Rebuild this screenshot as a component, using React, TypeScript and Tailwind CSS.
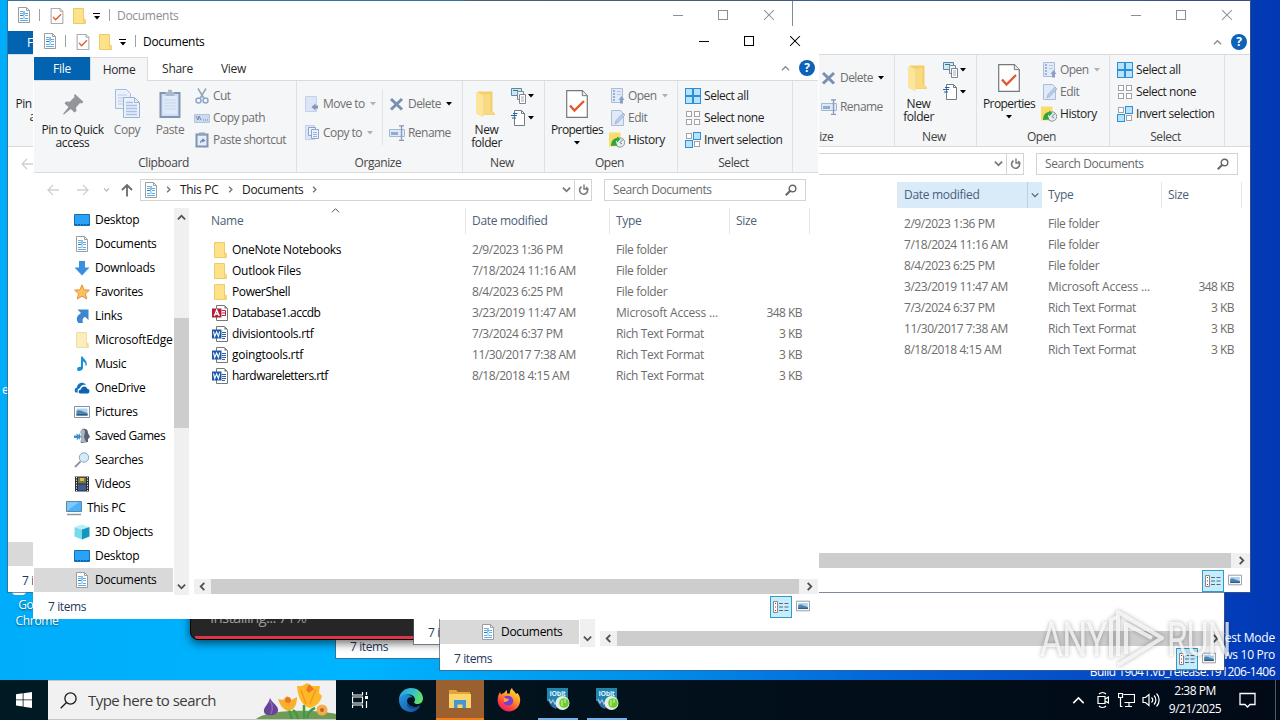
import type { ReactNode } from "react";

// Which part of a stacked window stays uncovered on the desktop
type Part = "full" | "left" | "right" | "bottom" | "status";

/* ---------- small glyphs ---------- */

function Caret({ className = "text-black" }: { className?: string }) {
    return (
        <svg width="6" height="4" viewBox="0 0 6 4" className={`shrink-0 ${className}`}>
            <path d="M0 0h6L3 3.6z" fill="currentColor" />
        </svg>
    );
}

function Chevron({ d, size = 9, width = 2, className = "text-[#505050]" }: { d: string; size?: number; width?: number; className?: string }) {
    return (
        <svg width={size} height={size} viewBox="0 0 10 10" className={`shrink-0 ${className}`} fill="none" stroke="currentColor" strokeWidth={width}>
            <path d={d} />
        </svg>
    );
}

const UP = "M1 7l4-4 4 4";
const DOWN = "M1 3l4 4 4-4";
const LEFT = "M7 1L3 5l4 4";
const RIGHT = "M3 1l4 4-4 4";

function Svg({ children, w = 16, h = 16, box }: { children: ReactNode; w?: number; h?: number; box?: string }) {
    return (
        <svg width={w} height={h} viewBox={box ?? `0 0 ${w} ${h}`} fill="none" className="shrink-0">
            {children}
        </svg>
    );
}

/* ---------- file and folder icons ---------- */

function DocIcon() {
    return (
        <Svg>
            <path d="M2.5.5h8l3 3v12h-11z" fill="#fff" stroke="#9a9ea3" />
            <path d="M10.500.5v3h3" stroke="#9a9ea3" />
            <path d="M4 4.500h3M4 6.500h3M4 11.500h3M4 13.500h8M9 6.500h3M9 8.500h3M9 11.500h3" stroke="#5fb0e6" />
            <path d="M4 8.500h3.500M8 4v4" stroke="#2a7fc4" />
            <path d="M8 9v3" stroke="#5fb0e6" />
        </Svg>
    );
}

function CheckDocIcon({ w = 16, h = 16 }: { w?: number; h?: number }) {
    return (
        <Svg w={w} h={h} box="0 0 22 28">
            <path d="M.7.7h15.600l5 5v21.600H.7z" fill="#fff" stroke="#76797c" strokeWidth="1.200" />
            <path d="M16.300.7v5h5" fill="#e8e8e8" stroke="#76797c" />
            <path d="M4 15.500l4.500 5L18 11" stroke="#e2592b" strokeWidth="2.400" />
        </Svg>
    );
}

function FolderIcon({ pale = false }: { pale?: boolean }) {
    return (
        <Svg>
            <path d="M2.500.5h10v11l1.500 1v3H2.500z" fill={pale ? "#fbeebc" : "#fde28a"} stroke={pale ? "#f0dfa4" : "#eccb68"} />
            <path d="M12.500 10.500l2 1v4h-2z" fill={pale ? "#f3dc98" : "#f7d874"} stroke={pale ? "#f0dfa4" : "#eccb68"} strokeWidth=".6" />
        </Svg>
    );
}

function BigFolderIcon() {
    return (
        <Svg w={22} h={28}>
            <path d="M2 1.500h14.500v20l2.500 2v1.500H2z" fill="#f3cf6c" />
            <path d="M0 2l7.500 3v22.500L0 23.500z" fill="#fde49b" />
            <path d="M7.500 5l7-1.500V21l4.500 3.500H7.500z" fill="#f8da83" />
        </Svg>
    );
}

function WordIcon() {
    return (
        <Svg>
            <path d="M4.500.5h8l3 3v12h-11z" fill="#fff" stroke="#777" />
            <path d="M12.500.5v3h3z" fill="#777" />
            <path d="M10 6.500h4M10 8.500h4M10 10.500h4M10 12.500h3" stroke="#2a5ca8" />
            <path d="M0 3.500h9.500v9H0z" fill="#1e58a8" />
            <path d="M1.500 5.500l1.200 5 1.900-4.500 1.800 4.500 1.300-5" stroke="#fff" strokeWidth="1.100" />
        </Svg>
    );
}

function AccessIcon() {
    return (
        <Svg>
            <path d="M4.500.5h8l3 3v12h-11z" fill="#fff" stroke="#777" />
            <path d="M12.500.5v3h3z" fill="#777" />
            <path d="M10 5.500h3.500v5H10M10 8h3" stroke="#b5223f" />
            <path d="M0 3.500h9.500v9H0z" fill="#b01f3b" />
            <path d="M2.300 11L4.700 5l2.500 6M3.200 9h3.200" stroke="#fff" strokeWidth="1.300" />
        </Svg>
    );
}

function DesktopIcon() {
    return (
        <Svg>
            <path d="M.5 2.500h15v11H.5z" fill="#2aa2f8" stroke="#1272b8" />
            <path d="M1 12.500h14" stroke="#0f5c9c" strokeDasharray="2 1" />
        </Svg>
    );
}

function DownloadIcon() {
    return (
        <Svg>
            <path d="M5 1h6v6.500h4.500L8 15.500.5 7.500H5z" fill="#3b8ee0" />
        </Svg>
    );
}

function StarIcon() {
    return (
        <Svg>
            <path d="M8 .8l2.100 5 5.300.4-4 3.500 1.300 5.300L8 12.100 3.300 15l1.300-5.300-4-3.500 5.300-.4z" fill="#fbc15e" stroke="#e2903a" />
        </Svg>
    );
}

function LinkIcon() {
    return (
        <Svg>
            <path d="M3.500 1.500h11v10.500l-3.500-3.300c-2.500 1.300-3 3.500-2 6.300H4.500C1.500 11.500 2.500 8 7 5z" fill="#3d87cf" />
        </Svg>
    );
}

function MusicIcon() {
    return (
        <Svg>
            <path d="M7 .5h1.600c.5 2.500 4.600 3.500 4.200 8-.3 1-1 1.600-1.300 1.600.6-2.600-.7-3.800-2.500-4.600v6.800c-.4 2.500-5.800 4-6 .9C3 11 5.500 10.300 7 10.800z" fill="#1c8fdc" />
        </Svg>
    );
}

function OneDriveIcon() {
    return (
        <Svg>
            <path d="M1.500 12.500C0 11 .5 8 3 7.500 3.200 3 9.500 1 12 5 9 4 6.500 5.500 6 8c-2.500.5-3 3-2 4.500z" fill="#1272c2" />
            <path d="M6.500 13.500c-2.500 0-2.500-4 .5-4 .5-4 5.500-4 6.200-.7 3 .2 3 4.700.3 4.700z" fill="#0f62ae" />
        </Svg>
    );
}

function PictureIcon({ w = 16 }: { w?: number }) {
    return (
        <Svg w={w} h={w} box="0 0 16 16">
            <path d="M.5 2.500h15v11H.5z" fill="#fff" stroke="#8b8f96" />
            <path d="M2.500 4.500h11v7h-11z" fill="#a9d4f5" />
            <path d="M2.500 7c3-2 6 1 11 2v2.500h-11z" fill="#5484a8" />
            <path d="M2.500 10h11v1.500h-11z" fill="#2d5d88" />
        </Svg>
    );
}

function GamesIcon() {
    return (
        <Svg>
            <path d="M8 1c5-1 6 2 6 4l2 4-2 2v3l-7 1z" fill="#56616c" />
            <path d="M6 4c2-4 5-3 5 0l-1 5 2 5H6l2-5z" fill="#aab5bf" />
            <path d="M0 7.500h3l-1-2 3 1.500V5l2 3.500L5 12v-2l-2.500 2.500.5-2.500H0z" fill="#3f8bd0" />
        </Svg>
    );
}

function SearchFolderIcon() {
    return (
        <Svg>
            <path d="M6.500 9.500L1 15" stroke="#8d959c" strokeWidth="1.800" />
            <circle cx="10" cy="5.500" r="4.700" fill="#d3ebfb" stroke="#8aa5b8" />
        </Svg>
    );
}

function VideoIcon() {
    return (
        <Svg>
            <path d="M1 .5h14v15H1z" fill="#2b2d33" />
            <path d="M4 1.500h8v6H4z" fill="#6f7a46" />
            <path d="M4 8.500h8v6H4z" fill="#3f5d94" />
            <path d="M2.500 1v14M13.500 1v14" stroke="#e6e6e6" strokeDasharray="1.300 1.300" />
            <path d="M6 2h4v3H6z" fill="#d8bc4f" />
        </Svg>
    );
}

function ThisPcIcon() {
    return (
        <Svg>
            <path d="M.5 1.500h15v10H.5z" fill="#4db2f5" stroke="#5b87a8" />
            <path d="M1 11V2h12z" fill="#7cc9fa" />
            <path d="M1 14.500h14" stroke="#8a98a5" strokeWidth="1.500" />
        </Svg>
    );
}

function CubeIcon() {
    return (
        <Svg>
            <path d="M.5 3L8 5.500v10L.5 12.500z" fill="#76dcec" />
            <path d="M.5 3L8 .5 15.500 3 8 5.500z" fill="#b4f0f7" />
            <path d="M8 5.500L15.500 3v9.500L8 15.500z" fill="#1597bd" />
        </Svg>
    );
}

/* ---------- ribbon icons ---------- */

function PinIcon() {
    return (
        <Svg w={24} h={24}>
            <path d="M14 2l8.500 8-2 1.500-1.500-.5-4 4.500.5 3.500-2 1.500L9.700 17 3 22.500l-1-.5 5.500-7L3.500 11.500 5 9.500l3.800.3L13.500 5 13 3.500z" fill="#929599" />
        </Svg>
    );
}

function CopyIcon() {
    return (
        <Svg w={25} h={29}>
            <path d="M.5.500h11l4 4v15H.5z" fill="#eaf1fb" stroke="#a9bbd9" />
            <path d="M3 6h9M3 9h10M3 12h10M3 15h8" stroke="#b8cbe8" />
            <path d="M8.500 8.500h11l5 5v15h-16z" fill="#eaf1fb" stroke="#9db1d2" />
            <path d="M19.500 8.500v5h5" stroke="#9db1d2" />
            <path d="M11 13.500h7M11 16.500h11M11 19.500h11M11 22.500h11M11 25.500h11" stroke="#a9c1e6" strokeWidth="1.300" />
        </Svg>
    );
}

function PasteIcon() {
    return (
        <Svg w={22} h={29}>
            <path d="M1.500 4h19v24h-19z" fill="#cfdef5" stroke="#8294b4" strokeWidth="2" />
            <path d="M4 7h14v18H4z" fill="#dfe9f8" />
            <path d="M6.500 3H9V.8h4V3h2.500v4h-9z" fill="#a9b7cd" />
            <path d="M5 11h12M5 14h12M5 17h12M5 20h12" stroke="#c3d4ee" />
        </Svg>
    );
}

function CutIcon() {
    return (
        <Svg>
            <path d="M4 .5l6 10M12 .5l-6 10" stroke="#98a5b8" strokeWidth="1.500" />
            <circle cx="4.500" cy="12.500" r="2.500" stroke="#8ea7cc" strokeWidth="1.500" />
            <circle cx="11.500" cy="12.500" r="2.500" stroke="#8ea7cc" strokeWidth="1.500" />
        </Svg>
    );
}

function CopyPathIcon() {
    return (
        <Svg>
            <path d="M.5 4.500h15v8H.5z" fill="#cbdaf0" stroke="#b6c5de" />
            <path d="M2 6l2 4 1-4 2 4M9 10h1M11 10h1M13 10h1" stroke="#7487a8" />
        </Svg>
    );
}

function PasteShortcutIcon() {
    return (
        <Svg>
            <path d="M2.500 2.500h11v12h-11z" fill="#e4edf9" stroke="#8093b3" strokeWidth="2" />
            <path d="M5 .5h6v3H5z" fill="#93a4bf" />
            <path d="M6 12c-.5-3 1-4 2.500-4.500V6l3 2.500-3 2.300V9.500C7 9.800 6.500 10.500 6 12z" fill="#7089b3" />
        </Svg>
    );
}

function MoveToIcon() {
    return (
        <Svg>
            <path d="M1.500.5h11v15h-11z" fill="#dbe5f5" stroke="#c2d1e9" />
            <path d="M14 9.500h-2.500V7.500L7.500 11l4 3.500v-2H14z" fill="#8296b8" />
        </Svg>
    );
}

function CopyToIcon() {
    return (
        <Svg>
            <path d="M1.500.500h9v14h-9z" fill="#dbe5f5" stroke="#c2d1e9" />
            <path d="M4.500 2.500h7v8h-7z" fill="#edf3fc" stroke="#8fa5c8" />
            <path d="M7.500 4.500h7v9h-7z" fill="#edf3fc" stroke="#8fa5c8" />
            <path d="M9 7.500h4M9 9.500h4M9 11.500h4" stroke="#9cb3d8" />
        </Svg>
    );
}

function DeleteIcon() {
    return (
        <Svg>
            <path d="M2 3l11 10.500M13 3L2 13.500" stroke="#7a8faf" strokeWidth="3" />
        </Svg>
    );
}

function RenameIcon() {
    return (
        <Svg>
            <path d="M.5 4.500h15v7H.5z" fill="#dfe9f8" stroke="#a4b7d6" />
            <path d="M2 7h7v3H2z" fill="#93abd3" />
            <path d="M12.500 1.500v13M10 .8h2.500L15 .8M10 15.300h5" stroke="#8298bd" strokeWidth="1.300" />
        </Svg>
    );
}

function NewItemIcon() {
    return (
        <Svg>
            <path d="M.5.500h10v7H.5z" fill="#cfe6f8" stroke="#5a86ab" />
            <path d="M2 2.500h5" stroke="#377d6f" />
            <path d="M6.500 3.500h6v8h-6z" fill="#f2f6fa" stroke="#7c8791" />
            <path d="M8.500 6.500h6v9h-6z" fill="#fff" stroke="#7c8791" />
            <path d="M10 9h3M10 11h3M10 13h3" stroke="#a4aeb8" />
        </Svg>
    );
}

function EasyAccessIcon() {
    return (
        <Svg>
            <path d="M3.500.5h7l3 3v12h-10z" fill="#fff" stroke="#757a80" />
            <path d="M10.500.5v3h3" stroke="#757a80" />
            <path d="M2 3.500h4.500M0 5.500h6M1 8h4" stroke="#1a62b0" strokeWidth="1.200" />
        </Svg>
    );
}

function OpenIcon() {
    return (
        <Svg>
            <path d="M2.500.5h11v14h-11z" fill="#e2ebf8" stroke="#abbcd8" />
            <path d="M4 3h2M4 6h2M4 9h2M4 12h2" stroke="#86a0cb" strokeWidth="1.500" />
            <path d="M8 3.500h4M8 6.500h4" stroke="#b3c6e4" />
            <path d="M12.500 8l3 4H14v3.500h-3V12H9.500z" fill="#8ba0c4" />
        </Svg>
    );
}

function EditIcon() {
    return (
        <Svg>
            <path d="M2.500.5h9l3 3v12h-12z" fill="#dfe9f8" stroke="#abbcd8" />
            <path d="M6 14l1-3.500 7-7.500 2 2-7 7.500z" fill="#b8cae6" stroke="#96abd0" strokeWidth=".6" />
        </Svg>
    );
}

function HistoryIcon() {
    return (
        <Svg>
            <path d="M0 .5h11.500v14H0z" fill="#f9dc6a" />
            <circle cx="11" cy="10.500" r="4.700" fill="#e6ebed" stroke="#8d979e" />
            <path d="M11 10.500l3-3M11 10.500l2 1.500" stroke="#70808a" />
            <path d="M2 14c0-4.500 2-7.500 6-8V4.500L11.500 7 8 10.500V8.300c-1.500.5-1 3 .5 5.200z" fill="#33a540" />
        </Svg>
    );
}

function SelectIcon({ cells }: { cells: [boolean, boolean, boolean, boolean] }) {
    const spots = [[0, 0], [8, 0], [0, 8], [8, 8]];
    return (
        <Svg>
            {spots.map(([x, y], i) =>
                cells[i] ? (
                    <rect key={i} x={x + 0.5} y={y + 0.5} width="7" height="7" fill="#b9e3fb" stroke="#2d8fd9" />
                ) : (
                    <rect key={i} x={x + 1.5} y={y + 1.5} width="5" height="5" fill="#fff" stroke="#a3a3a3" />
                ),
            )}
        </Svg>
    );
}

/* ---------- ribbon ---------- */

function SmallItem({ icon, label, off = false, caret, className = "h-[22px]" }: { icon: ReactNode; label: string; off?: boolean; caret?: string; className?: string }) {
    return (
        <div className={`flex items-center whitespace-nowrap ${className} ${off ? "tracking-[-0.540px] text-[#6f6f6f]" : "tracking-[-0.450px] text-[#1e1e1e]"}`}>
            {icon}
            <span className="ml-[3px]">{label}</span>
            {caret && (
                <span className="ml-[5px]">
                    <Caret className={caret} />
                </span>
            )}
        </div>
    );
}

function BigItem({ icon, lines, className, off = false }: { icon: ReactNode; lines: string[]; className: string; off?: boolean }) {
    return (
        <div className={`flex shrink-0 flex-col items-center whitespace-nowrap leading-[13px] ${className} ${off ? "text-[#6f6f6f]" : "text-[#1e1e1e]"}`}>
            <div className="mt-[4px] mb-[5px] flex h-[29px] items-center">{icon}</div>
            {lines.map((line) => (
                <span key={line}>{line}</span>
            ))}
        </div>
    );
}

function Group({ label, className, children }: { label?: string; className: string; children?: ReactNode }) {
    return (
        <div className={`flex h-[91px] shrink-0 flex-col border-r border-[#dfe1e3] ${className}`}>
            <div className="flex h-[73px] pt-1">{children}</div>
            {label && <div className="pt-px pr-[3px] text-center leading-[18px] text-[#444]">{label}</div>}
        </div>
    );
}

function Ribbon({ part }: { part: Part }) {
    const full = part === "full";
    if (part === "left") {
        return (
            <div className="flex h-[93px] border-y border-[#dadbdc] bg-[#f5f6f7] tracking-[-0.420px]">
                <Group className="w-[263px]">
                    <BigItem icon={<PinIcon />} lines={["Pin to Quick", "access"]} className="w-[77px]" />
                </Group>
            </div>
        );
    }
    return (
        <div className="flex h-[93px] border-y border-[#dadbdc] bg-[#f5f6f7] tracking-[-0.420px]">
            <Group label={full ? "Clipboard" : undefined} className="w-[263px]">
                {full && (
                    <>
                        <BigItem icon={<PinIcon />} lines={["Pin to Quick", "access"]} className="w-[77px]" />
                        <BigItem icon={<CopyIcon />} lines={["Copy"]} className="w-[32px]" off />
                        <BigItem icon={<PasteIcon />} lines={["Paste"]} className="ml-[5px] w-[44px]" off />
                        <div className="ml-[2px]">
                            <SmallItem icon={<CutIcon />} label="Cut" off />
                            <SmallItem icon={<CopyPathIcon />} label="Copy path" off />
                            <SmallItem icon={<PasteShortcutIcon />} label="Paste shortcut" off />
                        </div>
                    </>
                )}
            </Group>
            <Group label="Organize" className="w-[166px]">
                <div className="ml-[9px] w-[76px] pt-1">
                    {full && (
                        <>
                            <SmallItem icon={<MoveToIcon />} label="Move to" off caret="text-[#b0b0b0]" className="-ml-[2px] h-[29px]" />
                            <SmallItem icon={<CopyToIcon />} label="Copy to" off caret="text-[#b0b0b0]" className="-ml-[2px] h-[29px]" />
                        </>
                    )}
                </div>
                <div className="mt-1 mr-[6px] h-[56px] w-px bg-[#e2e3e4]" />
                <div className="pt-1">
                    <SmallItem icon={<DeleteIcon />} label="Delete" off caret="text-black" className="h-[29px]" />
                    <SmallItem icon={<RenameIcon />} label="Rename" off className="h-[29px]" />
                </div>
            </Group>
            <Group label="New" className="w-[82px]">
                <BigItem icon={<BigFolderIcon />} lines={["New", "folder"]} className="w-[47px]" />
                <div className="ml-px">
                    <div className="flex h-[22px] items-center gap-px">
                        <NewItemIcon />
                        <Caret />
                    </div>
                    <div className="flex h-[22px] items-center gap-px">
                        <EasyAccessIcon />
                        <Caret />
                    </div>
                </div>
            </Group>
            <Group label="Open" className="w-[133px]">
                <div className="flex w-[64px] flex-col items-center">
                    <BigItem icon={<CheckDocIcon w={22} h={28} />} lines={["Properties"]} className="w-[64px] tracking-[-0.600px]" />
                    <span className="mt-[5px] leading-none">
                        <Caret />
                    </span>
                </div>
                <div>
                    <SmallItem icon={<OpenIcon />} label="Open" off caret="text-[#b0b0b0]" />
                    <SmallItem icon={<EditIcon />} label="Edit" off />
                    <SmallItem icon={<HistoryIcon />} label="History" />
                </div>
            </Group>
            <Group label="Select" className="w-[115px]">
                <div className="ml-[7px]">
                    <SmallItem icon={<SelectIcon cells={[true, true, true, true]} />} label="Select all" />
                    <SmallItem icon={<SelectIcon cells={[false, false, false, false]} />} label="Select none" />
                    <SmallItem icon={<SelectIcon cells={[false, true, true, false]} />} label="Invert selection" />
                </div>
            </Group>
        </div>
    );
}

/* ---------- explorer window ---------- */

const places = [
    { label: "Desktop", icon: <DesktopIcon /> },
    { label: "Documents", icon: <DocIcon /> },
    { label: "Downloads", icon: <DownloadIcon /> },
    { label: "Favorites", icon: <StarIcon /> },
    { label: "Links", icon: <LinkIcon /> },
    { label: "MicrosoftEdge", icon: <FolderIcon pale /> },
    { label: "Music", icon: <MusicIcon /> },
    { label: "OneDrive", icon: <OneDriveIcon /> },
    { label: "Pictures", icon: <PictureIcon /> },
    { label: "Saved Games", icon: <GamesIcon /> },
    { label: "Searches", icon: <SearchFolderIcon /> },
    { label: "Videos", icon: <VideoIcon /> },
    { label: "This PC", icon: <ThisPcIcon />, root: true },
    { label: "3D Objects", icon: <CubeIcon /> },
    { label: "Desktop", icon: <DesktopIcon /> },
    { label: "Documents", icon: <DocIcon />, selected: true },
];

const files = [
    { name: "OneNote Notebooks", date: "2/9/2023 1:36 PM", type: "File folder", size: "", icon: <FolderIcon />, tracking: "tracking-[-0.340px]" },
    { name: "Outlook Files", date: "7/18/2024 11:16 AM", type: "File folder", size: "", icon: <FolderIcon />, tracking: "tracking-[-0.280px]" },
    { name: "PowerShell", date: "8/4/2023 6:25 PM", type: "File folder", size: "", icon: <FolderIcon />, tracking: "tracking-[-0.400px]" },
    { name: "Database1.accdb", date: "3/23/2019 11:47 AM", type: "Microsoft Access ...", size: "348 KB", icon: <AccessIcon />, tracking: "tracking-[-0.480px]" },
    { name: "divisiontools.rtf", date: "7/3/2024 6:37 PM", type: "Rich Text Format", size: "3 KB", icon: <WordIcon />, tracking: "tracking-[-0.300px]" },
    { name: "goingtools.rtf", date: "11/30/2017 7:38 AM", type: "Rich Text Format", size: "3 KB", icon: <WordIcon />, tracking: "tracking-[-0.240px]" },
    { name: "hardwareletters.rtf", date: "8/18/2018 4:15 AM", type: "Rich Text Format", size: "3 KB", icon: <WordIcon />, tracking: "tracking-[-0.530px]" },
];

function TitleBar({ part }: { part: Part }) {
    return (
        <div className={`flex h-[30px] items-center pb-[2px] pl-2 ${part === "full" ? "text-black" : "text-[#8f8f8f]"}`}>
            {part !== "right" && (
                <>
                    <DocIcon />
                    <div className="ml-[7px] h-3 w-px bg-[#a0a0a0]" />
                    <div className="ml-[9px] flex pt-[2px]">
                        <CheckDocIcon />
                    </div>
                    <div className="ml-[6px] flex pt-[2px]">
                        <FolderIcon />
                    </div>
                    <div className="ml-[6px] flex flex-col items-center gap-[2px] pt-[3px] text-black">
                        <div className="h-px w-[7px] bg-black" />
                        <Caret />
                    </div>
                    <div className="ml-[9px] h-3 w-px bg-[#a0a0a0]" />
                    <span className="ml-[7px] pt-[2px]">Documents</span>
                </>
            )}
            <div className="ml-auto flex">
                {["M0 5.500h10", "M.5.500h9v9h-9z", "M0 0l10 10M10 0L0 10"].map((d) => (
                    <div key={d} className="flex w-[45.500px] justify-center">
                        <svg width="11" height="11" viewBox="0 0 11 11" fill="none" stroke="currentColor" strokeWidth="1.050">
                            <path d={d} />
                        </svg>
                    </div>
                ))}
            </div>
        </div>
    );
}

function HelpBadge() {
    return <div className="mb-px flex size-4 items-center justify-center rounded-full bg-[#0c62b8] text-[12px] leading-none font-bold text-white">?</div>;
}

function Tabs({ part }: { part: Part }) {
    return (
        <div className="flex h-[23px] items-center text-[#2b2b2b]">
            {part !== "right" && <div className="flex h-[23px] w-[56px] items-center justify-center bg-[#0263b1] pt-px text-white">File</div>}
            {part === "full" && (
                <>
                    <div className="relative -mb-px flex h-6 w-[58px] items-center justify-center border-x border-t border-[#dadbdc] bg-[#f5f6f7]">Home</div>
                    <span className="w-[58px] pt-px pl-px text-center">Share</span>
                    <span className="w-[55px] pt-px text-center">View</span>
                </>
            )}
            {part !== "left" && (
                <div className="ml-auto flex items-center gap-[9px] pr-[3px]">
                    <Chevron d={UP} width={1.400} className="text-[#8a8a8a]" />
                    <HelpBadge />
                </div>
            )}
        </div>
    );
}

function Crumbs() {
    return (
        <>
            <DocIcon />
            <span className="ml-[6px]"><Chevron d={RIGHT} size={7} className="text-[#777]" /></span>
            <span className="ml-2 w-[39px] pt-px whitespace-nowrap">This PC</span>
            <span className="ml-2"><Chevron d={RIGHT} size={7} className="text-[#777]" /></span>
            <span className="ml-2 w-[61px] pt-px">Documents</span>
            <span className="ml-2"><Chevron d={RIGHT} size={7} className="text-[#777]" /></span>
        </>
    );
}

function AddressRow({ part }: { part: Part }) {
    return (
        <div className="flex h-[35px] items-center pb-[2px] pl-[13px]">
            <svg width="74" height="16" viewBox="0 0 74 16" fill="none" className="shrink-0">
                <path d="M1 8h11M6 3L1 8l5 5M30 8h11M36 3l5 5-5 5" stroke="#d0d0d0" strokeWidth="1.300" />
                <path d="M57 6.500l2.500 2.500L62 6.500" stroke="#bdbdbd" strokeWidth="1.300" />
            </svg>
            <Svg w={12} h={14}>
                <path d="M6 13.500V2M1 7l5-5 5 5" stroke="#6a6a6a" strokeWidth="1.800" />
            </Svg>
            {part !== "left" && (
                <>
                    <div className="ml-[7px] flex h-[22px] w-[452px] shrink-0 items-center border border-[#d4d4d4] pl-[2px] text-[#1a1a1a]">
                        {part === "full" && <Crumbs />}
                        <div className="ml-auto flex h-full items-center">
                            <Chevron d={DOWN} className="text-[#777]" />
                            <div className="ml-[3px] flex h-full w-[17px] items-center justify-center border-l border-[#d4d4d4]">
                                <Svg w={11} h={12}>
                                    <path d="M8.200 3.200A4 4 0 1 1 3.500 2.800" stroke="#777" strokeWidth="1.600" />
                                    <path d="M6 .500v4.500h4.500" stroke="#777" strokeWidth="1.400" />
                                </Svg>
                            </div>
                        </div>
                    </div>
                    <div className="ml-3 flex h-[22px] w-[202px] shrink-0 items-center justify-between border border-[#d4d4d4] pr-2 pl-2 tracking-[-0.420px] text-[#6a6a6a]">
                        Search Documents
                        <Svg w={12} h={12}>
                            <circle cx="7.500" cy="4.500" r="3.300" stroke="#666" strokeWidth="1.400" />
                            <path d="M5 7L.8 11.200" stroke="#666" strokeWidth="2" />
                        </Svg>
                    </div>
                </>
            )}
        </div>
    );
}

function Sidebar({ part }: { part: Part }) {
    return (
        <div className="flex h-[387px] w-[156px] shrink-0">
            <div className="w-[139px] overflow-hidden text-black">
                {places.map((p, i) => {
                    const drawn = part === "full" || (part === "bottom" && p.selected);
                    return (
                        <div key={i} className={`flex h-6 items-center gap-[5px] whitespace-nowrap ${p.root ? "pl-8" : "pl-10"} ${p.selected ? "bg-[#d9d9d9]" : ""}`}>
                            {drawn && (
                                <>
                                    {p.icon}
                                    <span className={p.label === "MicrosoftEdge" ? "tracking-[-0.200px]" : p.label === "Saved Games" ? "tracking-[-0.480px]" : ""}>{p.label}</span>
                                </>
                            )}
                        </div>
                    );
                })}
            </div>
            <div className="ml-px flex w-[15px] flex-col items-center bg-[#f0f0f0]">
                <div className="flex h-[18px] items-center"><Chevron d={UP} /></div>
                <div className="mt-[92px] h-[110px] w-full bg-[#cdcdcd]" />
                <div className="mt-auto flex h-[18px] items-center"><Chevron d={DOWN} /></div>
            </div>
        </div>
    );
}

function FileTable({ part }: { part: Part }) {
    const hovered = part === "right";
    return (
        <>
            <div className="flex h-[26px] text-[#4c607a]">
                <div className="relative flex w-[276px] items-center border-r border-[#e5e5e5] pl-[21px]">
                    {!hovered && (
                        <>
                            Name
                            <div className="absolute top-[-2px] left-[141px]">
                                <Chevron d={UP} width={1.100} />
                            </div>
                        </>
                    )}
                </div>
                {hovered ? (
                    <div className="-ml-px flex w-[145px] items-center bg-[#d9ebf9] pl-[7px]">
                        Date modified
                        <div className="ml-auto flex h-full w-[15px] items-center justify-center border-l border-[#b5d4ea]">
                            <Chevron d={DOWN} size={8} width={1.500} className="text-[#4c607a]" />
                        </div>
                    </div>
                ) : (
                    <div className="flex w-[144px] items-center border-r border-[#e5e5e5] pl-[6px]">Date modified</div>
                )}
                <div className="flex w-[120px] items-center border-r border-[#e5e5e5] pl-[6px]">Type</div>
                <div className="flex w-[80px] items-center border-r border-[#e5e5e5] pl-[6px]">Size</div>
            </div>
            <div className="pt-[5px]">
                {files.map((f, i) => (
                    <div key={f.name} className="flex h-[21px] items-center whitespace-nowrap text-[#6d6d6d]">
                        <div className={`flex w-[282px] items-center gap-1 pl-[22px] text-black ${f.tracking}`}>
                            {!hovered && f.icon}
                            {!hovered && <span className="pt-px">{f.name}</span>}
                        </div>
                        <span className="w-[144px] pt-px tracking-[-0.450px]">{f.date}</span>
                        <span className={`w-[110px] pt-px ${i === 3 ? "tracking-[-0.200px]" : "tracking-[-0.380px]"}`}>{f.type}</span>
                        <span className="w-[76px] pt-px text-right tracking-[-0.550px]">{f.size}</span>
                    </div>
                ))}
            </div>
        </>
    );
}

function FileList({ part }: { part: Part }) {
    return (
        <div className="flex h-[387px] flex-1 flex-col">
            {(part === "full" || part === "right") && <FileTable part={part} />}
            <div className="mt-auto mb-[1px] ml-1 flex h-[15px] items-center bg-[#f0f0f0]">
                <div className="flex w-[17px] justify-center"><Chevron d={LEFT} /></div>
                <div className="h-full flex-1 bg-[#cdcdcd]" />
                <div className="flex w-[19px] justify-center pl-[2px]"><Chevron d={RIGHT} /></div>
            </div>
        </div>
    );
}

function StatusBar() {
    return (
        <div className="flex h-[23px] items-center pl-[14px] text-[#1e395b]">
            <span className="pt-px tracking-[-0.400px]">7 items</span>
            <div className="ml-auto flex items-center gap-[4px] pr-2">
                <div className="flex size-[22px] items-center justify-center border border-[#2f9bc8] bg-[#c7ecfd]">
                    <Svg>
                        <path d="M.5 2.500h4v11h-4z" fill="#fff" stroke="#8c8585" />
                        <path d="M2 4.500h1M2 8h1M2 11.500h1" stroke="#b02a2a" />
                        <path d="M6 4.500h4M6 8h4M6 11.500h4M11.500 4.500h4M11.500 8h4M11.500 11.500h4" stroke="#55697a" />
                    </Svg>
                </div>
                <div className="flex pb-px">
                    <PictureIcon w={14} />
                </div>
            </div>
        </div>
    );
}

function ExplorerWindow({ x, y, part }: { x: number; y: number; part: Part }) {
    return (
        <div
            className={`absolute flex h-[591px] w-[784px] flex-col overflow-hidden bg-white ${part === "full" ? "ring-1 ring-white" : "ring-1 ring-[#4a5a70]/70"}`}
            style={{ left: x, top: y }}
        >
            {part !== "bottom" && part !== "status" && (
                <>
                    <TitleBar part={part} />
                    <Tabs part={part} />
                    <Ribbon part={part} />
                    <AddressRow part={part} />
                </>
            )}
            {part !== "status" && (
                <div className="mt-auto flex">
                    <Sidebar part={part} />
                    <FileList part={part} />
                </div>
            )}
            <div className={part === "status" ? "mt-auto" : ""}>
                <StatusBar />
            </div>
        </div>
    );
}

/* ---------- desktop ---------- */

function Installer() {
    return (
        <div className="absolute top-[300px] left-[190px] flex h-[340px] w-[860px] flex-col justify-end overflow-hidden rounded-lg border border-black bg-[#262626] shadow-[0_3px_10px_rgba(0,0,0,0.600)]">
            <span className="mb-[9px] ml-[19px] text-[15px] leading-[20px] tracking-[-0.700px] text-[#9a9a9a]">Installing... 71%</span>
            <div className="mx-1 h-[3px] bg-[#dc3545]" />
        </div>
    );
}

function Watermark() {
    return (
        <div className="absolute top-[606px] left-[1040px] flex h-[66px] w-[192px] items-center text-white/75 drop-shadow-[0_0_2px_rgba(0,0,0,0.400)]">
            <span className="w-[66px] shrink-0 origin-left scale-x-[0.720] pt-px font-['Roboto'] text-[49px] leading-none font-normal tracking-[-1px]">ANY</span>
            <svg width="60" height="66" viewBox="0 0 60 66" fill="none" stroke="currentColor" strokeWidth="4" strokeLinejoin="round" className="shrink-0">
                <path d="M12 50V6l44 26L12 59" />
                <path d="M20 48V18l26 14" />
                <path d="M5 52V14l6-3" />
            </svg>
            <span className="ml-px w-[60px] origin-left scale-x-[0.680] pt-px font-['Roboto'] text-[49px] leading-none font-normal tracking-[-1px]">RUN</span>
        </div>
    );
}

function IobitIcon() {
    return (
        <Svg w={24} h={24}>
            <path d="M1 1h21v13H1z" fill="#2384ad" />
            <path d="M2 14h13l-5 8-4-2z" fill="#2f6ea8" />
            <text x="3.500" y="8.500" fontSize="7" fontWeight="bold" fill="#d8f1fa">IObit</text>
            <path d="M3 12l2 4 2-3 2 4 2-3" stroke="#9fc9e0" strokeWidth="1.200" />
            <circle cx="16.500" cy="16" r="7" fill="#e4efe4" />
            <circle cx="18" cy="16" r="4.800" fill="#6ccb2f" />
            <path d="M16 13v6M19 12v4" stroke="#b8ec86" strokeWidth="1.500" />
        </Svg>
    );
}

function EdgeIcon() {
    return (
        <Svg w={24} h={24}>
            <defs>
                <linearGradient id="edgeTop" x1="0" y1="0" x2="1" y2="0.400">
                    <stop offset="0" stopColor="#2a9fe0" />
                    <stop offset="0.600" stopColor="#35c1c8" />
                    <stop offset="1" stopColor="#5fe06a" />
                </linearGradient>
                <linearGradient id="edgeLow" x1="0" y1="0" x2="1" y2="1">
                    <stop offset="0" stopColor="#2498e6" />
                    <stop offset="1" stopColor="#124f9c" />
                </linearGradient>
            </defs>
            <path d="M0 12C0 5 5 0 12 0s12 5 12 10.500c0 5-5 6.500-8 5-2-1 0-2 0-4C16 8 12 6 8 6.500 4 7 1 9 0 12z" fill="url(#edgeTop)" />
            <path d="M0 12c1-4 4-5.500 7.500-5.500 3 0 5.500 1.500 6 3-4-1-6.500 2-5 5.500 2 4.500 8.500 5 13 2.500C19 22 15 24 12 24 5 24 0 19 0 12z" fill="url(#edgeLow)" />
            <path d="M8.500 15c2 4.500 8.500 5 13 2.500C20 20 16 22 13 21c-4-1-6-4-4.500-6z" fill="#174a8c" />
        </Svg>
    );
}

function FirefoxIcon() {
    return (
        <Svg w={24} h={24}>
            <defs>
                <linearGradient id="fox" x1="0.800" y1="0" x2="0.200" y2="1">
                    <stop offset="0" stopColor="#ffe045" />
                    <stop offset="0.400" stopColor="#ff9a24" />
                    <stop offset="0.750" stopColor="#fb3b45" />
                    <stop offset="1" stopColor="#e01b7b" />
                </linearGradient>
            </defs>
            <path d="M3 4l1 2.500C5 5.500 6 5 7 5c1-1.500 2-2.500 3-3v3.500h3C12.500 3 14 1 15 0c.5 2.500 3 3.500 4 6l1.500-1C23 8 23.500 11 23 14c-1 6-6 9.500-11 9.500S1 19 .7 13C.5 9.500 1.500 6.500 3 4z" fill="url(#fox)" />
            <path d="M7 9c3-2.500 8-1 9 2.500 1 4-2 6.500-5 6-3 0-4.500-2-4-4 2 0 4-1 4.500-2C9 11.500 7.500 10.500 7 9z" fill="#7a3fd0" />
            <path d="M7 9.500c1 1 3 1.200 5 1.500-.5 2-2.500 2.700-5 3z" fill="#ffa436" />
        </Svg>
    );
}

function TaskExplorerIcon() {
    return (
        <Svg w={22} h={20}>
            <path d="M0 1h7l2 2h12v5H0z" fill="#dea736" />
            <path d="M0 5h22v14H0z" fill="#fbd56b" />
            <path d="M5 19v-8h12v8h-3.500v-3.500h-5V19z" fill="#4596d4" />
        </Svg>
    );
}

function Flowers() {
    return (
        <svg width="80" height="38" viewBox="0 0 80 38" className="shrink-0">
            <path d="M0 38C12 28 60 28 80 33v5z" fill="#6f9c55" />
            <path d="M36 38l-4-12M48 38V24M42 38c-1-5-2-7-5-9M51 37c1-5 3-8 8-10" stroke="#3f9a43" strokeWidth="2.500" fill="none" />
            <path d="M14 17c2 5 9 8 8 13-1 5-13 6-14 1-1-5 5-8 6-14z" fill="#69429a" />
            <path d="M14 20c3 4 3 8 1 13" stroke="#8c67bb" strokeWidth="1.500" fill="none" />
            <path d="M22 18l5 1 4-4 4 4 6-3c0 7-2 12-8 14-6-1-9-6-11-12z" fill="#f9b02a" />
            <path d="M41 5l5 0 5-3 5 3 8 0-1 7 3 3c-1 5-5 10-12 12-8-2-12-10-13-22z" fill="#fdb827" />
            <path d="M45 9l5 14M60 8l-6 15" stroke="#f39a1f" strokeWidth="1.500" fill="none" />
            <path d="M50 9l3-6 5 5-5 4z" fill="#ee7426" />
            <circle cx="32" cy="19" r="3" fill="#ee7426" />
            <circle cx="66" cy="29" r="5.500" fill="#f6ac4c" />
            <circle cx="66" cy="29" r="2" fill="#bf6420" />
        </svg>
    );
}

function Taskbar() {
    return (
        <div className="absolute top-[680px] left-0 flex h-10 w-[1280px] items-center bg-linear-to-r from-[#001a24] via-[#02111c] to-[#020a18] text-white">
            <div className="flex w-12 justify-center">
                <Svg>
                    <path d="M0 2.300L6.700 1.300v6.200H0zM7.500 1.200L16 0v7.500H7.500zM0 8.300h6.700v6.300L0 13.600zM7.500 8.300H16V16l-8.500-1.200z" fill="#fff" />
                </Svg>
            </div>
            <div className="flex h-10 w-72 items-center border-y border-[#c6c6c6] bg-[#f1f1f1] pl-3 text-[15px] tracking-[-0.530px] text-[#3c3c3c]">
                <Svg w={17} h={17}>
                    <circle cx="10.500" cy="6.500" r="5.600" stroke="#1a1a1a" strokeWidth="1.300" />
                    <path d="M6.500 10.500L.7 16.300" stroke="#1a1a1a" strokeWidth="1.300" />
                </Svg>
                <span className="ml-[11px] flex-1 whitespace-nowrap">Type here to search</span>
                <Flowers />
            </div>
            <div className="flex w-[48px] justify-center">
                <Svg>
                    <path d="M.5 0v3h10V0M.5 5h10v6H.5zM.5 16v-3h10v3M14.500 0v3M14.500 9v7" stroke="#fff" strokeWidth="1.200" />
                    <path d="M13 4h3v3h-3z" fill="#fff" />
                </Svg>
            </div>
            <div className="flex w-[52px] justify-center pl-[2px]"><EdgeIcon /></div>
            <div className="flex h-10 w-12 items-center justify-center border-b-2 border-[#f97b0e] bg-[#9a602f]"><TaskExplorerIcon /></div>
            <div className="ml-px flex h-10 w-12 items-center justify-center"><FirefoxIcon /></div>
            <div className="ml-[5px] flex h-10 w-10 items-center justify-center border-b-2 border-[#76b0ea]"><IobitIcon /></div>
            <div className="ml-[9px] flex h-10 w-10 items-center justify-center border-b-2 border-[#76b0ea]"><IobitIcon /></div>
            <div className="ml-auto flex h-10 items-center">
                <Chevron d={UP} size={13} width={1.200} className="text-white" />
                <span className="ml-3">
                    <Svg w={12} h={18}>
                        <path d="M1 5.500h7v7H1zM8 8l3.500-2v6L8 10M2 3c2-2 5-2 7 0M2 15c2 2 5 2 7 0" stroke="#fff" strokeWidth="1.200" />
                    </Svg>
                </span>
                <span className="ml-[9px]">
                    <Svg w={17} h={16}>
                        <path d="M5.500 2.500h11v8h-10M11 10.500v4M7 14.500h7M.5 1.500h4v4h-4zM2.500 5.500v9h2" stroke="#fff" strokeWidth="1.200" />
                    </Svg>
                </span>
                <span className="ml-[7px]">
                    <Svg w={18} h={16}>
                        <path d="M1 5.500h2.500L7 2.500v11l-3.500-3H1z" stroke="#fff" strokeWidth="1.200" />
                        <path d="M9.500 5.500c1.500 1.500 1.500 3.500 0 5M12 3.500c2.500 2.500 2.500 6.500 0 9M14.500 1.500c3.500 3.500 3.500 9.500 0 13" stroke="#fff" strokeWidth="1.200" />
                    </Svg>
                </span>
                <div className="w-[70px] text-center leading-[18px] tracking-[-0.500px]">
                    <div>2:38 PM</div>
                    <div>9/21/2025</div>
                </div>
                <span className="ml-[9px]">
                    <Svg w={17} h={17}>
                        <path d="M1 1.500h15v11h-5L8.500 15 6 12.500H1z" stroke="#fff" strokeWidth="1.300" />
                    </Svg>
                </span>
                <div className="mr-1 ml-[19px] h-10 w-px bg-[#4c5a68]" />
            </div>
        </div>
    );
}

export default function App() {
    return (
        <div className="relative h-[720px] w-[1280px] overflow-hidden bg-[linear-gradient(90deg,#00adfa_0%,#00b4ff_28%,#0098ee_46%,#0468da_68%,#0545c2_90%,#0238b4_100%)] font-['Open_Sans','Noto_Sans',sans-serif] text-[12px] leading-[16px] tracking-[-0.300px]">
            {/* Desktop shortcuts */}
            <div className="absolute top-[382px] left-[2px] text-white">e</div>
            <div className="absolute top-[588px] left-[12px] h-[7px] w-[14px] rounded-b bg-white" />
            <div className="absolute top-[597px] left-[7px] w-[60px] text-center text-white [text-shadow:0_1px_2px_#0008]">
                Google
                <br />
                Chrome
            </div>
            <div className="absolute top-[629px] right-[5px] text-right leading-[17px] tracking-[-0.550px] text-white">
                <div className="tracking-[-0.200px]">Test Mode</div>
                <div className="tracking-[-0.300px]">Windows 10 Pro</div>
                <div>Build 19041.vb_release.191206-1406</div>
            </div>

            {/* Stacked windows, back to front */}
            <ExplorerWindow x={336} y={67} part="status" />
            <Installer />
            <ExplorerWindow x={414} y={53} part="status" />
            <ExplorerWindow x={440} y={79} part="bottom" />
            <ExplorerWindow x={466} y={1} part="right" />
            <ExplorerWindow x={8} y={1} part="left" />
            <ExplorerWindow x={34} y={27} part="full" />

            <Watermark />
            <Taskbar />
        </div>
    );
}
